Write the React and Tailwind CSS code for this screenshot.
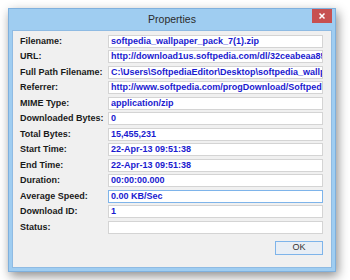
import React from "react";

const rows = [
  ["Filename:", "softpedia_wallpaper_pack_7(1).zip", 15],
  ["URL:", "http://download1us.softpedia.com/dl/32ceabeaa85", 16],
  ["Full Path Filename:", "C:\\Users\\SoftpediaEditor\\Desktop\\softpedia_wallpaper", 15],
  ["Referrer:", "http://www.softpedia.com/progDownload/Softpedia", 16],
  ["MIME Type:", "application/zip", 15],
  ["Downloaded Bytes:", "0", 16],
  ["Total Bytes:", "15,455,231", 15],
  ["Start Time:", "22-Apr-13 09:51:38", 16],
  ["End Time:", "22-Apr-13 09:51:38", 15],
  ["Duration:", "00:00:00.000", 16],
  ["Average Speed:", "0.00 KB/Sec", 15],
  ["Download ID:", "1", 16],
  ["Status:", "", 15],
];

export default function App() {
  return (
    <div
      className="w-[350px] h-[280px] bg-white pt-[8px] pl-[8px]"
      style={{ fontFamily: '"Liberation Sans", Arial, sans-serif' }}
    >
      <div className="w-[328px] h-[264px] bg-[#9fcdf1] border border-[#7fb0dd] shadow-[2px_4px_10px_rgba(0,0,0,0.45)] flex flex-col">
        <div className="h-[21px] flex items-center relative">
          <div className="flex-1 text-center text-[10.5px] text-[#2b2b2b] pt-[1px]">Properties</div>
          <div className="absolute right-[3px] top-0 w-[20px] h-[14px] bg-[#c75050] flex items-center justify-center">
            <svg width="8" height="8" viewBox="0 0 8 8">
              <path d="M1.5 1.5 L6.5 6.5 M6.5 1.5 L1.5 6.5" stroke="white" strokeWidth="1.5" />
            </svg>
          </div>
        </div>
        <div className="mx-[3px] mb-[3px] flex-1 bg-[#f0f0f0] border border-[#8fbbe3] pl-[7px] pr-[8px] pt-[4px] flex flex-col">
          {rows.map(([label, value, h], i) => (
            <div key={i} className="flex items-start" style={{ height: h }}>
              <div className="w-[88px] whitespace-nowrap text-[9px] font-bold text-[#1a1a1a] leading-[13px]">
                {label}
              </div>
              <div
                className={
                  "w-[215px] h-[13px] bg-white border overflow-hidden whitespace-nowrap pl-[2px] text-[9px] font-bold text-[#1a1ad0] leading-[11px] " +
                  (label === "Average Speed:" ? "border-[#7eb4ea]" : "border-[#d4d4d4]")
                }
              >
                {value}
              </div>
            </div>
          ))}
          <div className="flex justify-end mt-[5px]">
            <div className="w-[48px] h-[14px] border border-[#7eb4ea] bg-[#e8eef5] text-[9px] text-[#333] flex items-center justify-center">
              OK
            </div>
          </div>
        </div>
      </div>
    </div>
  );
}
